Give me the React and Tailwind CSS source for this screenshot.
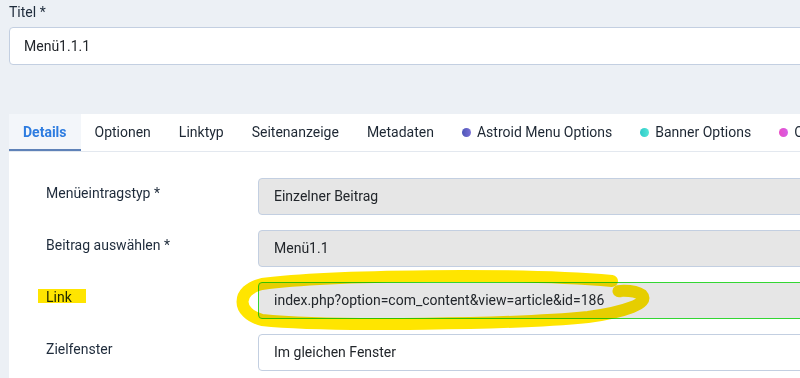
import React from "react";

const font = { fontFamily: "Roboto, 'Noto Sans', sans-serif" };

function Tab({ label, active, dot }) {
  return (
    <div
      className={
        "flex h-full shrink-0 items-center gap-[6px] px-[14px] whitespace-nowrap " +
        (active ? "bg-[#f3f6fa] border-b-2 border-[#5f82b8] pt-[2px] font-bold text-[#2d7ce0]" : "text-[#1d2733]")
      }
    >
      {dot && <span className={"inline-block h-[9px] w-[9px] rounded-full " + dot} />}
      <span>{label}</span>
    </div>
  );
}

function Row({ label, value, variant }) {
  const box =
    variant === "green"
      ? "bg-[#e6e6e6] border border-[#33d633]"
      : variant === "white"
      ? "bg-white border border-[#c3cfe1]"
      : "bg-[#e6e6e6] border border-[#c3cfe1]";
  return (
    <div className="flex h-[37px]">
      <div className="w-[212px] shrink-0 pt-[5px] text-[#1e2b3b]">{label}</div>
      <div className={"flex flex-1 items-center rounded-l-[4px] px-[15px] text-[#22262b] " + box}>{value}</div>
    </div>
  );
}

export default function App() {
  return (
    <div className="relative h-[378px] w-[800px] overflow-hidden bg-[#ecf0f5] text-[14px]" style={font}>
      <div className="pl-[9px] pt-[2px]">
        <div className="h-[20px] leading-[20px] text-[#1e2b3b]">Titel *</div>
        <div className="mt-[5px] flex h-[38px] w-[900px] items-center rounded-l-[4px] border border-[#c3cfe1] bg-white px-[14px] text-[#22262b]">
          Menü1.1.1
        </div>
        <div className="mt-[49px] w-[900px] bg-white">
          <div className="flex h-[38px] border-b border-[#e3e8ef]">
            <Tab label="Details" active />
            <Tab label="Optionen" />
            <Tab label="Linktyp" />
            <Tab label="Seitenanzeige" />
            <Tab label="Metadaten" />
            <Tab label="Astroid Menu Options" dot="bg-gradient-to-r from-[#4d57b8] to-[#7a6fd6]" />
            <Tab label="Banner Options" dot="bg-gradient-to-r from-[#2ec9c9] to-[#52e6d6]" />
            <Tab label="Options" dot="bg-gradient-to-r from-[#e94bc6] to-[#d65fe6]" />
          </div>
          <div className="flex flex-col gap-[15px] pl-[37px] pt-[26px] pb-[20px]">
            <Row label="Menüeintragstyp *" value="Einzelner Beitrag" />
            <Row label="Beitrag auswählen *" value="Menü1.1" />
            <Row label="Link" value="index.php?option=com_content&view=article&id=186" variant="green" />
            <Row label="Zielfenster" value="Im gleichen Fenster" variant="white" />
          </div>
        </div>
      </div>
      <svg className="pointer-events-none absolute left-0 top-0 mix-blend-multiply" width="800" height="378">
        <rect x="38" y="289" width="48" height="14" fill="#ffe500" />
        <path
          d="M 612 281 C 520 273, 330 275, 262 284 C 236 290, 236 313, 262 320 C 330 327, 520 324, 588 317 C 625 312, 650 303, 642 295 C 632 288, 610 292, 622 291"
          fill="none"
          stroke="#ffe500"
          strokeWidth="12"
          strokeLinecap="round"
          strokeLinejoin="round"
        />
      </svg>
    </div>
  );
}
